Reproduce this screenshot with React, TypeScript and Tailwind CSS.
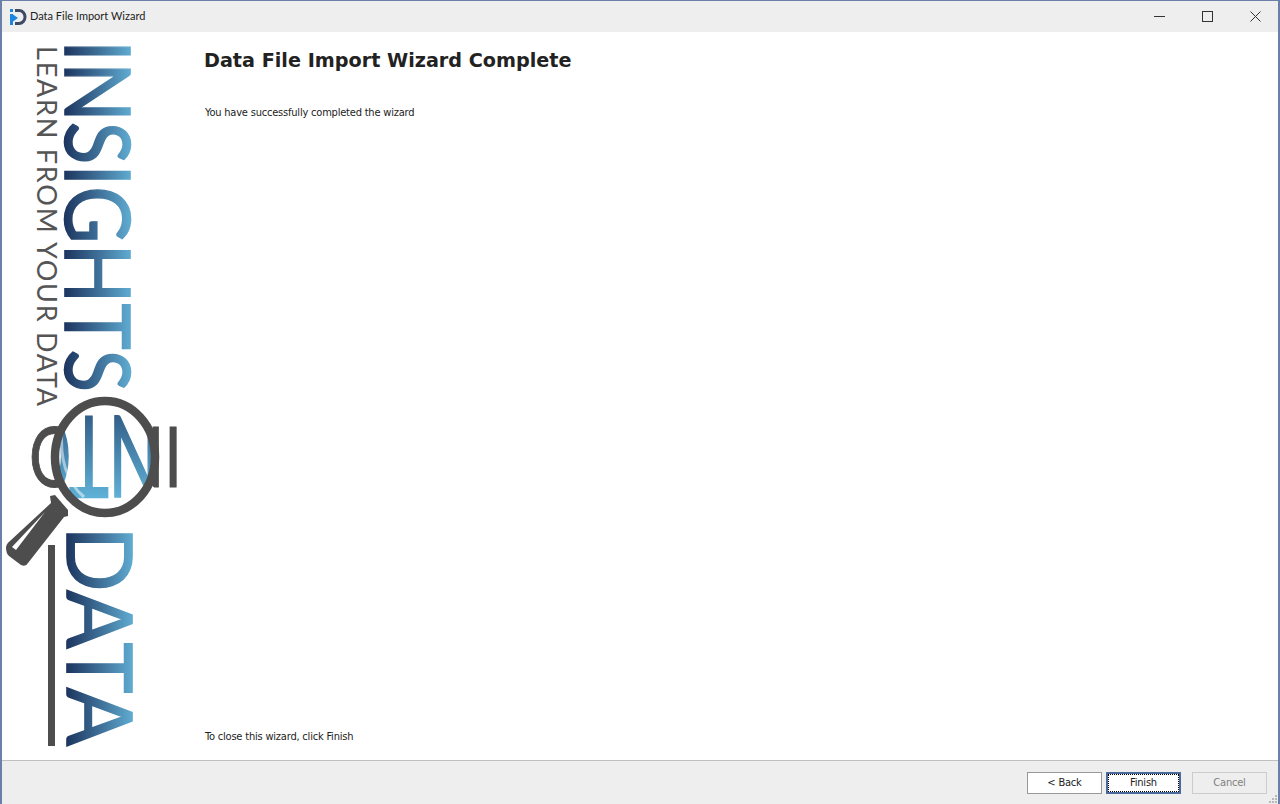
function SideLogo() {
  return (
    <svg width="190" height="728" viewBox="2 32 190 728" className="block shrink-0">
      <defs>
        <linearGradient id="inkH" gradientUnits="userSpaceOnUse" x1="0" y1="0" x2="0" y2="-68">
          <stop offset="0" stopColor="#1d3660" />
          <stop offset="0.5" stopColor="#3f7199" />
          <stop offset="1" stopColor="#62afd5" />
        </linearGradient>
        <linearGradient id="inkV" gradientUnits="userSpaceOnUse" x1="0" y1="0" x2="0" y2="-81">
          <stop offset="0" stopColor="#33608a" />
          <stop offset="1" stopColor="#5fb0d6" />
        </linearGradient>
        <clipPath id="lens">
          <ellipse cx="105" cy="457" rx="47" ry="54" />
        </clipPath>
      </defs>

      <g fontFamily="Lato, 'Open Sans', sans-serif">
        <text
          transform="translate(37 46) rotate(90)"
          fontSize="27"
          fill="#555555"
          textLength="360"
          lengthAdjust="spacing"
        >
          LEARN FROM YOUR DATA
        </text>
        <text
          transform="translate(65 40) rotate(90)"
          fontSize="92"
          fill="url(#inkH)"
          stroke="url(#inkH)"
          strokeWidth="1.6"
          textLength="352"
          lengthAdjust="spacingAndGlyphs"
        >
          INSIGHTS
        </text>
        <text
          transform="translate(67 526) rotate(90)"
          fontSize="92"
          fill="url(#inkH)"
          stroke="url(#inkH)"
          strokeWidth="1.6"
          textLength="220"
          lengthAdjust="spacingAndGlyphs"
        >
          DATA
        </text>
        <text
          transform="translate(182 427) rotate(180)"
          fontSize="84"
          fill="#4d4d4d"
          stroke="#4d4d4d"
          strokeWidth="1"
          textLength="153"
          lengthAdjust="spacingAndGlyphs"
        >
          INTO
        </text>
      </g>

      <ellipse cx="105" cy="457" rx="50" ry="56" fill="#ffffff" />
      <g clipPath="url(#lens)" fontFamily="Lato, 'Open Sans', sans-serif">
        <text
          transform="translate(160 416) rotate(180) scale(0.6 1)"
          fontSize="112"
          fill="url(#inkV)"
          stroke="url(#inkV)"
          strokeWidth="2"
        >
          NTO
        </text>
      </g>
      <path d="M62 428 Q58 475 84 497" fill="none" stroke="#ffffff" strokeOpacity="0.5" strokeWidth="3" />
      <ellipse cx="105" cy="457" rx="50" ry="56" fill="none" stroke="#4d4d4d" strokeWidth="8.5" />

      <path d="M50 496 L55 495 L68 510 L68 516 L64 517 L28 563 Q26 567 21 565 L9 556 Q6 553 6 548 Q6 544 10 541 L51 503 Z" fill="#4d4d4d" />
      <path d="M12 547 L45 512 L16 550 Z" fill="#ffffff" />
      <rect x="48" y="545" width="7" height="201" fill="#4d4d4d" />
    </svg>
  );
}

function AppIcon() {
  return (
    <svg width="18" height="18" viewBox="0 0 18 18" className="shrink-0">
      <rect x="1" y="1" width="3" height="3" fill="#1b86e0" />
      <rect x="1" y="6" width="3" height="11" fill="#1b86e0" />
      <path d="M6 1h4a7.5 8 0 0 1 0 16H6v-3h4a4.5 5 0 0 0 0-10H6z" fill="#3e4a63" />
      <path d="M4 6.5l5 3.5-5 3.5z" fill="#1b86e0" />
    </svg>
  );
}

function WindowControls() {
  return (
    <div className="mr-[-1px] ml-auto flex items-center">
      <div className="flex w-[48px] justify-center">
        <svg width="11" height="11" viewBox="0 0 11 11">
          <path d="M0 5.5h11" stroke="#333333" />
        </svg>
      </div>
      <div className="flex w-[48px] justify-center">
        <svg width="11" height="11" viewBox="0 0 11 11">
          <rect x="0.5" y="0.5" width="10" height="10" fill="none" stroke="#333333" />
        </svg>
      </div>
      <div className="flex w-[48px] justify-center">
        <svg width="11" height="11" viewBox="0 0 11 11">
          <path d="M0.5 0.5l10 10M10.5 0.5l-10 10" stroke="#333333" />
        </svg>
      </div>
    </div>
  );
}

export default function App() {
  return (
    <div className="flex h-[804px] w-[1280px] flex-col overflow-hidden border-t border-r-2 border-l-2 border-[#6b7fa8] bg-white">
      <div className="flex h-[31px] shrink-0 items-center bg-[#eeeeee] pl-[7px]">
        <AppIcon />
        <span className="ml-[3px] font-['Lato',sans-serif] text-[11px] text-[#222222]">Data File Import Wizard</span>
        <WindowControls />
      </div>

      <div className="flex min-h-0 flex-1">
        <SideLogo />
        <div className="flex flex-1 flex-col pt-[16px] pb-[16px] pl-[12px]">
          <h1 className="font-['DejaVu_Sans',sans-serif] text-[19.2px] leading-[26px] font-bold text-[#222222]">Data File Import Wizard Complete</h1>
          <p className="mt-[32px] pl-px font-['DejaVu_Sans_Condensed','DejaVu_Sans',sans-serif] text-[11px] leading-[14px] tracking-[-0.2px] text-[#222222]">You have successfully completed the wizard</p>
          <p className="mt-auto pl-px font-['DejaVu_Sans_Condensed','DejaVu_Sans',sans-serif] text-[11px] leading-[14px] tracking-[-0.2px] text-[#222222]">To close this wizard, click Finish</p>
        </div>
      </div>

      <div className="relative flex h-[44px] shrink-0 items-start justify-end border-t border-[#c0c0c0] bg-[#eeeeee] pt-[11px] pr-[11px] font-['DejaVu_Sans_Condensed','DejaVu_Sans',sans-serif] text-[11px] tracking-[-0.2px]">
        <button className="mr-[4px] h-[22px] w-[75px] border border-[#999999] bg-white pt-px text-[#222222]">&lt; Back</button>
        <button className="mr-[11px] h-[22px] w-[75px] border-2 border-[#4a6a9c] bg-white pt-px text-[#222222] outline-1 -outline-offset-3 outline-black outline-dotted">Finish</button>
        <button className="h-[22px] w-[75px] border border-[#cccccc] bg-[#eeeeee] pt-px text-[#808080]">Cancel</button>
        <svg width="9" height="9" viewBox="0 0 9 9" className="absolute right-0 bottom-0" fill="#b8b8b8">
          <rect x="6" y="0" width="2" height="2" />
          <rect x="3" y="3" width="2" height="2" />
          <rect x="6" y="3" width="2" height="2" />
          <rect x="0" y="6" width="2" height="2" />
          <rect x="3" y="6" width="2" height="2" />
          <rect x="6" y="6" width="2" height="2" />
        </svg>
      </div>
    </div>
  );
}
